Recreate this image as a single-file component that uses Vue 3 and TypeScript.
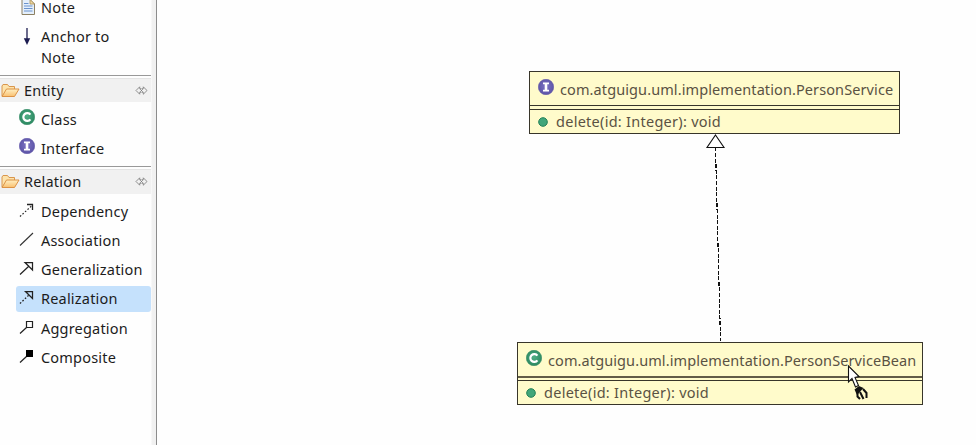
<script setup lang="ts">
interface Tool {
  label: string
  icon: string
  active?: boolean
}
interface Group {
  title: string
  tools: Tool[]
}
interface UmlNode {
  kind: 'class' | 'interface'
  name: string
  method: string
}

const groups: Group[] = [
  {
    title: 'Entity',
    tools: [
      { label: 'Class', icon: 'class' },
      { label: 'Interface', icon: 'interface' },
    ],
  },
  {
    title: 'Relation',
    tools: [
      { label: 'Dependency', icon: 'dependency' },
      { label: 'Association', icon: 'association' },
      { label: 'Generalization', icon: 'generalization' },
      { label: 'Realization', icon: 'realization', active: true },
      { label: 'Aggregation', icon: 'aggregation' },
      { label: 'Composite', icon: 'composite' },
    ],
  },
]

const nodes: UmlNode[] = [
  { kind: 'interface', name: 'com.atguigu.uml.implementation.PersonService', method: 'delete(id: Integer): void' },
  { kind: 'class', name: 'com.atguigu.uml.implementation.PersonServiceBean', method: 'delete(id: Integer): void' },
]
</script>

<template>
  <div class="editor">
    <svg class="defs" width="0" height="0">
      <defs>
        <radialGradient id="green" cx="50%" cy="45%" r="55%">
          <stop offset="0" stop-color="#4fae85" />
          <stop offset="1" stop-color="#2b8760" />
        </radialGradient>
        <radialGradient id="purple" cx="50%" cy="45%" r="55%">
          <stop offset="0" stop-color="#7d74c4" />
          <stop offset="1" stop-color="#5c53a6" />
        </radialGradient>
        <linearGradient id="folder" x1="0" y1="0" x2="0" y2="1">
          <stop offset="0" stop-color="#fff0c4" />
          <stop offset="1" stop-color="#f9c070" />
        </linearGradient>
        <symbol id="class" viewBox="0 0 16 16">
          <circle cx="8" cy="8" r="7.7" fill="url(#green)" stroke="#338c64" stroke-width=".6" />
          <path d="M11.4 5.7A3.9 3.9 0 1 0 11.4 10.3" fill="none" stroke="#fff" stroke-width="2.2" />
        </symbol>
        <symbol id="interface" viewBox="0 0 16 16">
          <circle cx="8" cy="8" r="7.7" fill="url(#purple)" stroke="#6258aa" stroke-width=".6" />
          <path d="M5 4.3H11M5 11.7H11" fill="none" stroke="#fff" stroke-width="1.8" />
          <path d="M8 4V12" stroke="#fff" stroke-width="2.6" />
        </symbol>
        <symbol id="dependency" viewBox="0 0 16 16">
          <path d="M1 14.5L12.5 4" fill="none" stroke="#222" stroke-width="1.2" stroke-dasharray="1.6 1.8" />
          <path d="M8 2.5H13.5V8" fill="none" stroke="#222" stroke-width="1.3" />
        </symbol>
        <symbol id="association" viewBox="0 0 16 16">
          <path d="M1 14.5L14 2" fill="none" stroke="#333" stroke-width="1.1" />
        </symbol>
        <symbol id="generalization" viewBox="0 0 16 16">
          <path d="M1 14.5L10.3 5.7M6 2.5H13.5V10Z" fill="none" stroke="#222" stroke-width="1.25" />
        </symbol>
        <symbol id="realization" viewBox="0 0 16 16">
          <path d="M1 14.5L10 6" fill="none" stroke="#222" stroke-width="1.3" stroke-dasharray="1.6 1.8" />
          <path d="M6.5 2.5H13.5V9.5Z" fill="none" stroke="#222" stroke-width="1.25" />
        </symbol>
        <symbol id="aggregation" viewBox="0 0 16 16">
          <path d="M1 14.5L7.5 8.5M7.5 2.5H13.5V8.5H7.5Z" fill="none" stroke="#222" stroke-width="1.2" />
        </symbol>
        <symbol id="composite" viewBox="0 0 16 16">
          <path d="M1 14.5L8 8" stroke="#222" stroke-width="1.2" />
          <path d="M7 2H14V9H7Z" fill="#000" />
        </symbol>
      </defs>
    </svg>

    <aside class="palette">
      <div class="notes">
        <div class="tool note">
          <svg class="icon" viewBox="0 0 16 16">
            <path d="M2 .5H10L14.5 5V15.5H2Z" fill="#e4effb" stroke="#8d8062" />
            <path d="M10 .5V5H14.5Z" fill="#f0d9a2" stroke="#a88f58" stroke-width=".8" />
            <path d="M4 4.5H8.5M4 7H12.5M4 9.5H12.5M4 12H12.5" stroke="#6a92cc" />
          </svg>
          <span>Note</span>
        </div>
        <div class="tool anchor">
          <svg class="icon" viewBox="0 0 16 16">
            <path d="M8 0V12" stroke="#1c1c50" stroke-width="1.3" />
            <path d="M4.8 10.2H11.2L8 17Z" fill="#1c1c50" />
          </svg>
          <span>Anchor to<br>Note</span>
        </div>
      </div>
      <section v-for="g in groups" :key="g.title" class="group">
        <header class="head">
          <svg class="folder" viewBox="0 0 19 15">
            <path d="M1 13V3L2 1.5H6.5L8 3.5H13.5V6" fill="#fde3ab" stroke="#d9964c" />
            <path d="M1 13.5L5.5 6H18L13.5 13.5Z" fill="url(#folder)" stroke="#dc9245" />
          </svg>
          <span>{{ g.title }}</span>
          <svg class="pin" viewBox="0 0 13 9">
            <path d="M4.7.8L1 4.5L4.7 8.2V6.3H6.3M8.3.8L12 4.5L8.3 8.2V6.3H6.7M4.7.8V2.7H6.3M8.3.8V2.7H6.7M5.2 3.2L7.8 5.8M7.8 3.2L5.2 5.8" fill="none" stroke="#777" stroke-width=".8" />
          </svg>
        </header>
        <div class="tools">
          <div v-for="t in g.tools" :key="t.label" class="tool" :class="{ active: t.active, entity: g.title === 'Entity' }">
            <svg class="icon"><use :href="'#' + t.icon" /></svg>
            <span>{{ t.label }}</span>
          </div>
        </div>
      </section>
    </aside>

    <main class="canvas">
      <article v-for="n in nodes" :key="n.name" class="node" :class="n.kind">
        <div class="title">
          <svg class="icon"><use :href="'#' + n.kind" /></svg>
          <span class="name">{{ n.name }}</span>
        </div>
        <div class="fields"></div>
        <div class="method">
          <svg class="dot" viewBox="0 0 10 10"><circle cx="5" cy="5" r="4.3" fill="#42a67a" stroke="#238157" /></svg>
          <span>{{ n.method }}</span>
        </div>
      </article>
      <svg class="link" viewBox="0 0 24 210">
        <path d="M11.5 13.5L16.5 207" fill="none" stroke="#111" stroke-width="1.2" stroke-dasharray="4 1.6" shape-rendering="crispEdges" />
        <path d="M11.5 1L20 13.5H3Z" fill="#fff" stroke="#111" stroke-width="1.1" />
      </svg>
      <svg class="cursor" viewBox="0 0 24 38">
        <path d="M1.5 1V17L5 13.5L8.5 22L11.5 20.5L8 12.5L12 11.5Z" fill="#fff" stroke="#111" stroke-width="1.1" />
        <path d="M7.5 24.5L12 21L16.5 23L10 30Z" fill="#111" />
        <path d="M10.5 28V31.5L13 34M13 27L16.5 34M16 24L19.5 28V33" fill="none" stroke="#111" stroke-width="2" />
      </svg>
    </main>
  </div>
</template>

<style>
body {
  margin: 0;
  overflow: hidden;
}
</style>

<style scoped>
.editor {
  display: flex;
  width: 976px;
  height: 445px;
  overflow: hidden;
  background: #fefefe;
  color: #1c1c1c;
  font: 14.5px/21px "Noto Sans", sans-serif;
}
.defs {
  position: absolute;
}
.palette {
  box-sizing: border-box;
  width: 157px;
  height: 445px;
  flex: none;
  padding-right: 5px;
  border-right: 1px solid #8c8c8c;
  background: linear-gradient(90deg, #fefefe 151px, #f1f1f1 152px);
  letter-spacing: 0.2px;
}
.notes {
  height: 75px;
}
.icon {
  width: 16px;
  height: 16px;
  flex: none;
  overflow: visible;
}
.tool {
  box-sizing: border-box;
  display: flex;
  gap: 6px;
  height: 25.3px;
  margin-left: 16px;
  padding: 2px 0 0 3px;
  border-radius: 3px;
  white-space: nowrap;
}
.tool .icon {
  margin-top: 1px;
}
.tool.entity .icon {
  margin-top: 0;
}
.tool.note {
  height: 23px;
  padding-top: 0;
  line-height: 15px;
}
.tool.note .icon {
  margin: -1px -1px 0 1px;
}
.tool.anchor {
  height: 45px;
  padding-top: 3px;
}
.tool.anchor .icon {
  margin-top: 2px;
}
.active {
  background: #c5e1fc;
}
.group {
  border-top: 1px solid #999;
}
.group:nth-of-type(2) {
  margin-top: 4px;
}
.head {
  display: flex;
  box-sizing: border-box;
  align-items: center;
  height: 24px;
  margin-top: 2px;
  padding: 0 3px 1px 1px;
  border-top: 1px solid #e4e4e4;
  background: #f1f1f1;
}
.group:nth-of-type(2) .head {
  height: 25px;
}
.folder {
  width: 19px;
  height: 15px;
  margin-right: 4px;
}
.pin {
  width: 13px;
  height: 9px;
  margin-left: auto;
}
.tools {
  display: flex;
  flex-direction: column;
  gap: 4px;
  padding-top: 5px;
}
.canvas {
  position: relative;
  flex: 1;
}
.node {
  position: absolute;
  box-sizing: border-box;
  border: 1px solid #38352a;
  background: #fffbcb;
  color: #5a5243;
  white-space: nowrap;
}
.node.interface {
  left: 372px;
  top: 71px;
  width: 371px;
  height: 63px;
}
.node.class {
  left: 360px;
  top: 342px;
  width: 406px;
  height: 63px;
}
.title {
  display: flex;
  gap: 6px;
  height: 33px;
  padding-left: 8px;
}
.title .icon {
  margin-top: 7px;
}
.name {
  padding-top: 7px;
  letter-spacing: 0.1px;
}
.fields {
  height: 3px;
  border: solid #38352a;
  border-width: 1px 0;
}
.class .fields {
  height: 2px;
  border-top: 2px solid #625c47;
}
.method {
  display: flex;
  align-items: center;
  gap: 8px;
  height: 23px;
  padding-left: 8px;
  letter-spacing: 0.27px;
}
.dot {
  width: 10px;
  height: 10px;
}
.link {
  position: absolute;
  left: 547px;
  top: 134px;
  width: 24px;
  height: 210px;
}
.cursor {
  position: absolute;
  left: 690px;
  top: 365px;
  width: 24px;
  height: 38px;
}
</style>
